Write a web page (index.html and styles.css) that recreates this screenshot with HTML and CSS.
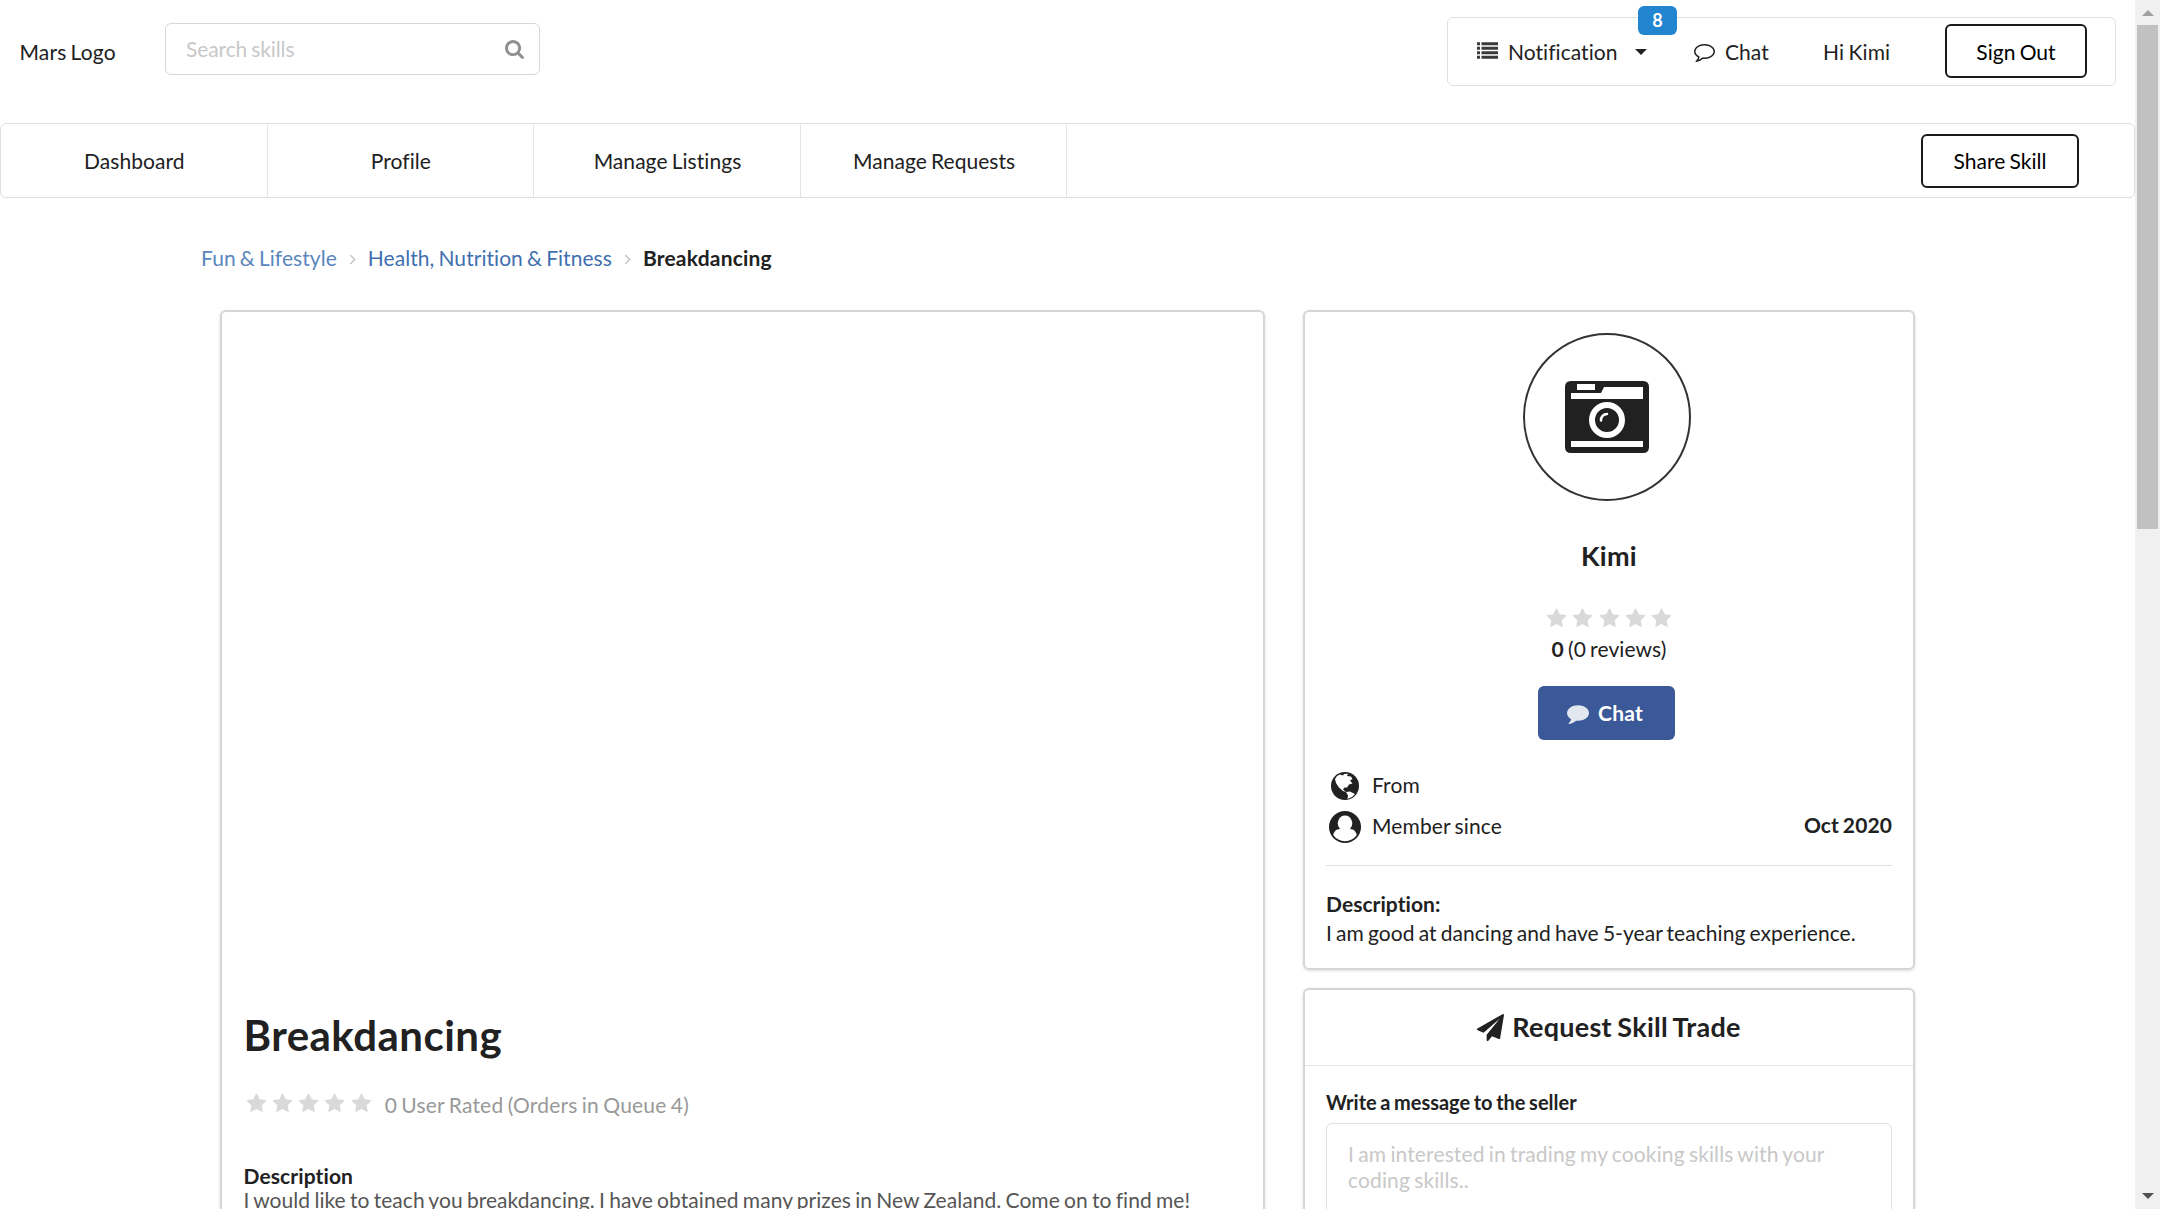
FILE: index.html
```html
<!DOCTYPE html>
<html lang="en">
<head>
<meta charset="utf-8">
<title>Breakdancing</title>
<link rel="stylesheet" href="styles.css">
</head>
<body>
<svg class="defs" aria-hidden="true">
  <symbol id="star" viewBox="0 0 1792 1792"><path d="M1728 647q0 22-26 48l-363 354 86 500q1 7 1 20 0 21-10.5 35.5t-30.5 14.5q-19 0-40-12l-449-236-449 236q-22 12-40 12-21 0-31.5-14.5t-10.5-35.5q0-6 2-20l86-500-364-354q-25-27-25-48 0-37 56-46l502-73 225-455q19-41 49-41t49 41l225 455 502 73q56 9 56 46z"/></symbol>
</svg>
<div class="app">
  <div class="page">
    <header class="top">
      <div class="logo">Mars Logo</div>
      <label class="search">
        <input type="text" placeholder="Search skills">
        <svg class="search-icon" viewBox="64 128 1664 1664"><path d="M1216 832q0-185-131.5-316.5t-316.5-131.5-316.5 131.5-131.5 316.5 131.5 316.5 316.5 131.5 316.5-131.5 131.5-316.5zm512 832q0 52-38 90t-90 38q-54 0-90-38l-343-342q-179 124-399 124-143 0-273.5-55.5t-225-150-150-225-55.5-273.5 55.5-273.5 150-225 225-150 273.5-55.5 273.5 55.5 225 150 150 225 55.5 273.5q0 220-124 399l343 343q37 37 37 90z"/></svg>
      </label>
      <div class="account">
        <div class="item notif">
          <svg class="list-icon" viewBox="0 0 28 22"><path d="M0 0h4v4H0zM6 0h22v4H6zM0 6h4v4H0zM6 6h22v4H6zM0 12h4v4H0zM6 12h22v4H6zM0 18h4v4H0zM6 18h22v4H6z"/></svg>
          <span>Notification</span>
          <i class="caret"></i>
          <span class="badge">8</span>
        </div>
        <div class="item chat">
          <svg class="bubble" viewBox="0 0 1792 1792"><path d="M896 384q-204 0-381.5 69.5t-282 187.5-104.5 255q0 112 71.5 213.5t201.5 175.5l87 50-27 96q-24 91-70 172 152-63 275-171l43-38 57 6q69 8 130 8 204 0 381.5-69.5t282-187.5 104.5-255-104.5-255-282-187.5-381.5-69.5zm896 512q0 174-120 321.5t-326 233-450 85.5q-70 0-145-8-198 175-460 242-49 14-114 22h-5q-15 0-27-10.5t-16-27.5v-1q-3-4-.5-12t2-10 4.5-9.5l6-9 7-8.5 8-9q7-8 31-34.5t34.5-38 31-39.5 32.5-51 27-59 26-76q-157-89-247.5-220t-90.5-281q0-174 120-321.5t326-233 450-85.5 450 85.5 326 233 120 321.5z"/></svg>
          <span>Chat</span>
        </div>
        <div class="item hi">Hi Kimi</div>
        <button class="outline signout">Sign Out</button>
      </div>
    </header>
    <nav class="nav">
      <a>Dashboard</a><a>Profile</a><a>Manage Listings</a><a>Manage Requests</a>
      <button class="outline share">Share Skill</button>
    </nav>
    <div class="crumbs">
      <a class="dim">Fun &amp; Lifestyle</a>
      <svg class="sep" viewBox="0 0 6 10"><path d="M1 1l4 4-4 4"/></svg>
      <a>Health, Nutrition &amp; Fitness</a>
      <svg class="sep" viewBox="0 0 6 10"><path d="M1 1l4 4-4 4"/></svg>
      <b>Breakdancing</b>
    </div>
    <main class="columns">
      <section class="card listing">
        <div class="media"></div>
        <h1>Breakdancing</h1>
        <div class="rating">
          <div class="stars"><svg><use href="#star"/></svg><svg><use href="#star"/></svg><svg><use href="#star"/></svg><svg><use href="#star"/></svg><svg><use href="#star"/></svg></div>
          <span>0 User Rated (Orders in Queue 4)</span>
        </div>
        <h3>Description</h3>
        <p class="about">I would like to teach you breakdancing. I have obtained many prizes in New Zealand. Come on to find me!</p>
      </section>
      <aside class="side">
        <section class="card seller">
          <div class="avatar">
            <svg viewBox="0 0 84 72"><path fill-rule="evenodd" d="M6 0H78Q84 0 84 6V66Q84 72 78 72H6Q0 72 0 66V6Q0 0 6 0ZM12 3V9H30V3ZM6 12V18H78V6H39L36 12ZM6 60V66H78V60ZM42 21A18 18 0 1 0 42 57A18 18 0 1 0 42 21ZM42 27A12 12 0 1 1 42 51A12 12 0 1 1 42 27Z"/><path class="glint" d="M36 39.5A6 6 0 0 1 42 33"/></svg>
          </div>
          <h2>Kimi</h2>
          <div class="stars"><svg><use href="#star"/></svg><svg><use href="#star"/></svg><svg><use href="#star"/></svg><svg><use href="#star"/></svg><svg><use href="#star"/></svg></div>
          <div class="reviews"><b>0</b> (0 reviews)</div>
          <button class="chat-btn">
            <svg viewBox="0 0 1792 1792"><path d="M1792 896q0 174-120 321.5t-326 233-450 85.5q-70 0-145-8-198 175-460 242-49 14-114 22-17 2-30.5-9t-17.5-29v-1q-3-4-.5-12t2-10 4.5-9.5l6-9 7-8.5 8-9q7-8 31-34.5t34.5-38 31-39.5 32.5-51 27-59 26-76q-157-89-247.5-220t-90.5-281q0-130 71-248.5t191-204.5 286-136.5 348-50.5q244 0 450 85.5t326 233 120 321.5z"/></svg>
            <span>Chat</span>
          </button>
          <div class="facts">
            <div class="fact">
              <svg class="globe" viewBox="0 0 28 28"><circle cx="14" cy="14" r="14"/><path class="land" d="M4 7 6 4 9 2.500 12 3.500 13 2 17 1.800 16 4 20 4.500 21.500 7 19 8.500 21.500 11.500 18 12.500 16 15.500 13.500 15.500 12 17.500 15 20 12 19 8 15.500 5 11ZM15 20 19 19.500 24 22 21 25 16.500 27 17 23.500Z"/></svg>
              <span>From</span>
            </div>
            <div class="fact">
              <svg class="user" viewBox="0 0 32 32"><circle cx="16" cy="16" r="16"/><path class="land" d="M16 4.500a7.200 7.800 0 0 1 5 13.400C25 18 27 20.500 27.800 24A14.300 14.300 0 0 1 4.200 24C5 20.500 7 18 11 17.900A7.200 7.800 0 0 1 16 4.500Z"/></svg>
              <span>Member since</span>
              <b>Oct 2020</b>
            </div>
          </div>
          <div class="bio"><b>Description:</b><br>I am good at dancing and have 5-year teaching experience.</div>
        </section>
        <section class="card trade">
          <h2><svg viewBox="0 0 1792 1792"><path d="M1764 11q33 24 27 64l-256 1536q-5 29-32 45-14 8-31 8-11 0-24-5l-453-185-242 295q-18 23-49 23-13 0-22-4-19-7-30.500-23.500t-11.500-36.500v-349l864-1059-1069 925-395-162q-37-14-40-55-2-40 32-59l1664-960q15-9 32-9 20 0 36 11z"/></svg><span>Request Skill Trade</span></h2>
          <div class="form">
            <label for="msg">Write a message to the seller</label>
            <textarea id="msg" placeholder="I am interested in trading my cooking skills with your coding skills.."></textarea>
          </div>
        </section>
      </aside>
    </main>
  </div>
  <div class="scrollbar"><i class="up"></i><div class="thumb"></div><i class="down"></i></div>
</div>
</body>
</html>
```
FILE: styles.css
```css
* { box-sizing: border-box; }
body {
  margin: 0;
  height: 1209px;
  overflow: hidden;
  background: #fff;
  color: #212122;
  font: 21px/30px Lato, "Liberation Sans", sans-serif;
  letter-spacing: .05px;
  word-spacing: -1.3px;
}
svg { display: block; flex: none; fill: currentColor; }
.defs { display: none; }
h1, h2, h3, p { margin: 0; }
input, textarea, button { font-family: inherit; font-size: 21px; letter-spacing: inherit; word-spacing: inherit; }
.app { display: flex; height: 1209px; overflow: hidden; }
.page { flex: 1; min-width: 0; height: 1209px; overflow: hidden; }

/* header */
.top { display: flex; align-items: flex-start; height: 123px; }
.logo { width: 165px; padding: 37px 0 0 19.5px; letter-spacing: .15px; }
.search {
  display: flex; align-items: center;
  width: 375px; height: 52px; margin-top: 23px; padding: 0 15px 0 20px;
  border: 1.5px solid #d8d8d9; border-radius: 6px;
}
.search input { flex: 1; min-width: 0; padding: 0 0 2px; border: 0; outline: 0; background: none; letter-spacing: -.1px; }
::placeholder { color: #c8c8c8; opacity: 1; }
.search-icon { width: 19px; height: 19px; margin-top: 1px; color: #909090; }
.account {
  display: flex; align-items: center;
  width: 669px; height: 69px; margin: 17px 19px 0 auto; padding-left: 29px;
  border: 1.5px solid #dededf; border-radius: 6px;
}
.item { display: flex; align-items: center; }
.notif { position: relative; width: 217px; }
.list-icon { width: 21px; height: 17px; margin: -2px 10px 0 0; color: #3a3a3a; }
.caret, .up, .down { border: 6px solid transparent; }
.caret { margin-left: 17px; border-top-color: #222; border-bottom-width: 0; }
.badge {
  position: absolute; left: 161px; top: -31px;
  width: 39px; height: 29px; border-radius: 6px;
  background: #2185d0; color: #fff; font: bold 18px/29px Lato, sans-serif; text-align: center;
}
.chat { width: 129px; }
.bubble { width: 21px; height: 21px; margin-right: 10px; }
.hi { width: 122px; letter-spacing: .15px; }
.outline {
  height: 54px; padding: 0; width: 142px;
  border: 2px solid #1a1a1a; border-radius: 6px; background: #fff; color: #000;
}
.signout { margin-bottom: 2px; padding-top: 1px; }

/* navigation */
.nav {
  display: flex; align-items: center; height: 75px;
  border: 1.5px solid #dededf; border-radius: 6px;
}
.nav a {
  width: 266.6px; height: 72px; padding-left: 1px; line-height: 72px; text-align: center;
  border-right: 1.5px solid #e4e4e5;
}
.share { width: 158px; margin: 0 55px 0 auto; }

/* breadcrumb */
.crumbs { display: flex; align-items: center; height: 30px; margin: 45px 0 0 201px; color: #4070b0; }
.crumbs .dim { color: #5a86be; }
.crumbs b { color: #212122; letter-spacing: .2px; }
.sep { width: 7px; height: 11px; margin: 3px 12px 0 12px; fill: none; stroke: #bbb; stroke-width: 1.2; }

/* columns */
.columns { display: grid; grid-template-columns: 1045px 612px; gap: 38px; margin: 37px 0 0 220px; align-items: start; }
.card { border: 2px solid #d6d6d7; border-radius: 6px; box-shadow: 0 1px 3px rgba(34, 36, 38, .15); }
.listing { height: 1300px; padding: 0 22px 0 21.5px; }
.media { height: 696px; }
h1 { font-size: 42px; line-height: 54px; letter-spacing: .45px; }
.stars { display: flex; gap: 5.300px; color: #d9d9d9; }
.stars svg { width: 21px; height: 21px; }
.rating { display: flex; align-items: center; height: 30px; margin-top: 26px; padding-left: 2px; gap: 13px; color: #999; }
.rating span { margin-top: 4px; letter-spacing: .2px; }
h3 { margin-top: 44px; font-size: 21px; line-height: 27px; letter-spacing: .1px; }
.about { line-height: 21px; color: #555; white-space: nowrap; word-spacing: -1.2px; }

.side { display: flex; flex-direction: column; gap: 18px; }
.seller { height: 660px; padding: 21px 21px 0; display: flex; flex-direction: column; align-items: center; }
.avatar {
  display: grid; place-items: center;
  width: 168px; height: 168px; margin-right: 5px; border: 2px solid #333; border-radius: 50%;
}
.avatar svg { width: 84px; height: 72px; }
.glint { fill: none; stroke: #fff; stroke-width: 2.500; stroke-linecap: round; }
h2 { font-size: 27px; line-height: 36px; letter-spacing: .25px; }
.seller h2 { margin: 37px 0 34px; }
.reviews { margin-top: 5px; letter-spacing: .1px; }
.chat-btn {
  display: flex; align-items: center; justify-content: center; gap: 9px;
  width: 137px; height: 54px; margin: 22px 5px 0 0; padding: 0 3px 1px 0;
  border: 0; border-radius: 6px; background: #3b5998; color: #fff; font-weight: bold; letter-spacing: .2px;
}
.chat-btn svg { width: 22px; height: 22px; margin-top: 1px; opacity: .85; }
.facts { width: 100%; height: 126px; padding-top: 25px; border-bottom: 1.5px solid #dededf; }
.fact { display: flex; align-items: center; height: 41px; }
.fact span { margin-bottom: 2px; letter-spacing: .13px; }
.globe { width: 28px; height: 28px; margin: 0 13px 0 5px; }
.user { width: 32px; height: 32px; margin: 0 11px 0 3px; }
.land { fill: #fff; }
.fact b { margin: 0 0 3px auto; letter-spacing: .1px; }
.bio { align-self: stretch; margin-top: 23px; line-height: 29px; white-space: nowrap; }
.trade { height: 500px; }
.trade h2 {
  display: flex; justify-content: center; align-items: center; gap: 8px;
  height: 76px; padding-bottom: 1px; border-bottom: 1.5px solid #e6e6e6;
}
.trade h2 svg { width: 27px; height: 27px; }
.form { display: flex; flex-direction: column; padding: 21px 21px; }
.form label { font-size: 20px; font-weight: bold; letter-spacing: 0; }
textarea {
  height: 250px; margin-top: 6px; padding: 17px 21px; resize: none;
  border: 1.5px solid #dededf; border-radius: 6px; line-height: 26px; letter-spacing: .13px;
}

/* scroll bar */
.scrollbar { display: flex; flex-direction: column; align-items: center; width: 25px; height: 1209px; background: #f0f0f0; }
.up { margin-top: 4px; border-bottom-color: #a0a0a0; }
.thumb { width: 21px; height: 504px; margin-top: 9px; background: #c1c1c1; }
.down { margin: auto 0 4px; border-top-color: #505050; }
```
